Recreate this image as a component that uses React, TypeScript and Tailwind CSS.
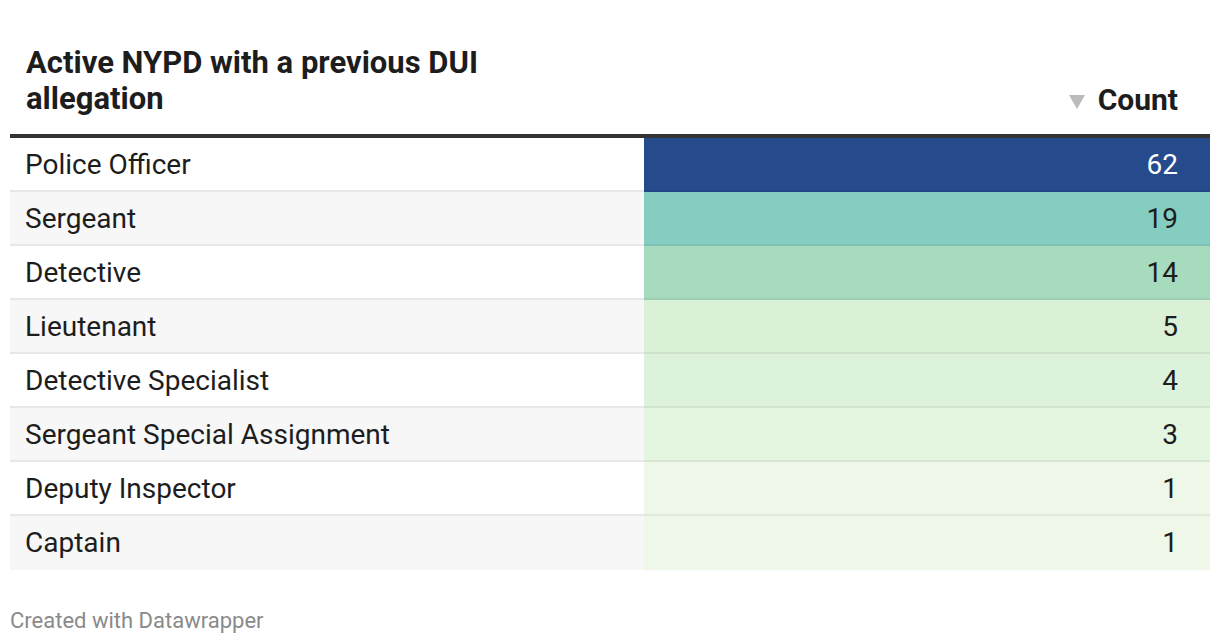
const rows = [
  { label: "Police Officer", count: 62, bg: "bg-[#254b8c]", text: "text-white" },
  { label: "Sergeant", count: 19, bg: "bg-[#86cdc1]", text: "text-[#1d1d1d]" },
  { label: "Detective", count: 14, bg: "bg-[#a7dbbd]", text: "text-[#1d1d1d]" },
  { label: "Lieutenant", count: 5, bg: "bg-[#daf0d7]", text: "text-[#1d1d1d]" },
  { label: "Detective Specialist", count: 4, bg: "bg-[#ddf2db]", text: "text-[#1d1d1d]" },
  { label: "Sergeant Special Assignment", count: 3, bg: "bg-[#e4f5e0]", text: "text-[#1d1d1d]" },
  { label: "Deputy Inspector", count: 1, bg: "bg-[#eff8e8]", text: "text-[#1d1d1d]" },
  { label: "Captain", count: 1, bg: "bg-[#eff8e8]", text: "text-[#1d1d1d]" },
];

const SortArrow = () => (
  <svg viewBox="0 0 16 14" className="w-4 h-[14px] mr-[13px] mb-[6px]">
    <path d="M0 0H16L8 14Z" fill="#bbbbbb" />
  </svg>
);

export default function App() {
  return (
    <div className="w-[1220px] h-[644px] bg-white px-[10px] font-['Roboto',sans-serif] text-[#1d1d1d]">
      <div className="pt-[45px]">
        <div className="flex items-end border-b-4 border-[#333333]">
          <div className="w-[634px] pl-4 pb-[17px] text-[31px] leading-[36px] font-bold">
            Active NYPD with a previous DUI
            <br />
            allegation
          </div>
          <div className="flex-1 flex items-end justify-end pr-8 pb-[19px] text-[30px] leading-[30px] font-bold">
            <SortArrow />
            <span>Count</span>
          </div>
        </div>

        {rows.map((r, i) => (
          <div
            key={r.label}
            className={`flex h-[54px] ${i === rows.length - 1 ? "" : "border-b-2 border-[#e8e8e8]"} ${i % 2 === 1 ? "bg-[#f7f7f7]" : "bg-white"}`}
          >
            <div className="w-[634px] pl-[15px] pt-px text-[28px] leading-[52px]">{r.label}</div>
            <div className={`flex-1 ${r.bg} ${r.text} text-right pr-8 pt-px text-[28px] leading-[52px] h-[54px] ${i === rows.length - 1 ? "" : "border-b-2 border-black/[0.06]"}`}>
              {r.count}
            </div>
          </div>
        ))}
      </div>

      <div className="mt-[40px] text-[22px] leading-[22px] text-[#8a8a8a]">Created with Datawrapper</div>
    </div>
  );
}
